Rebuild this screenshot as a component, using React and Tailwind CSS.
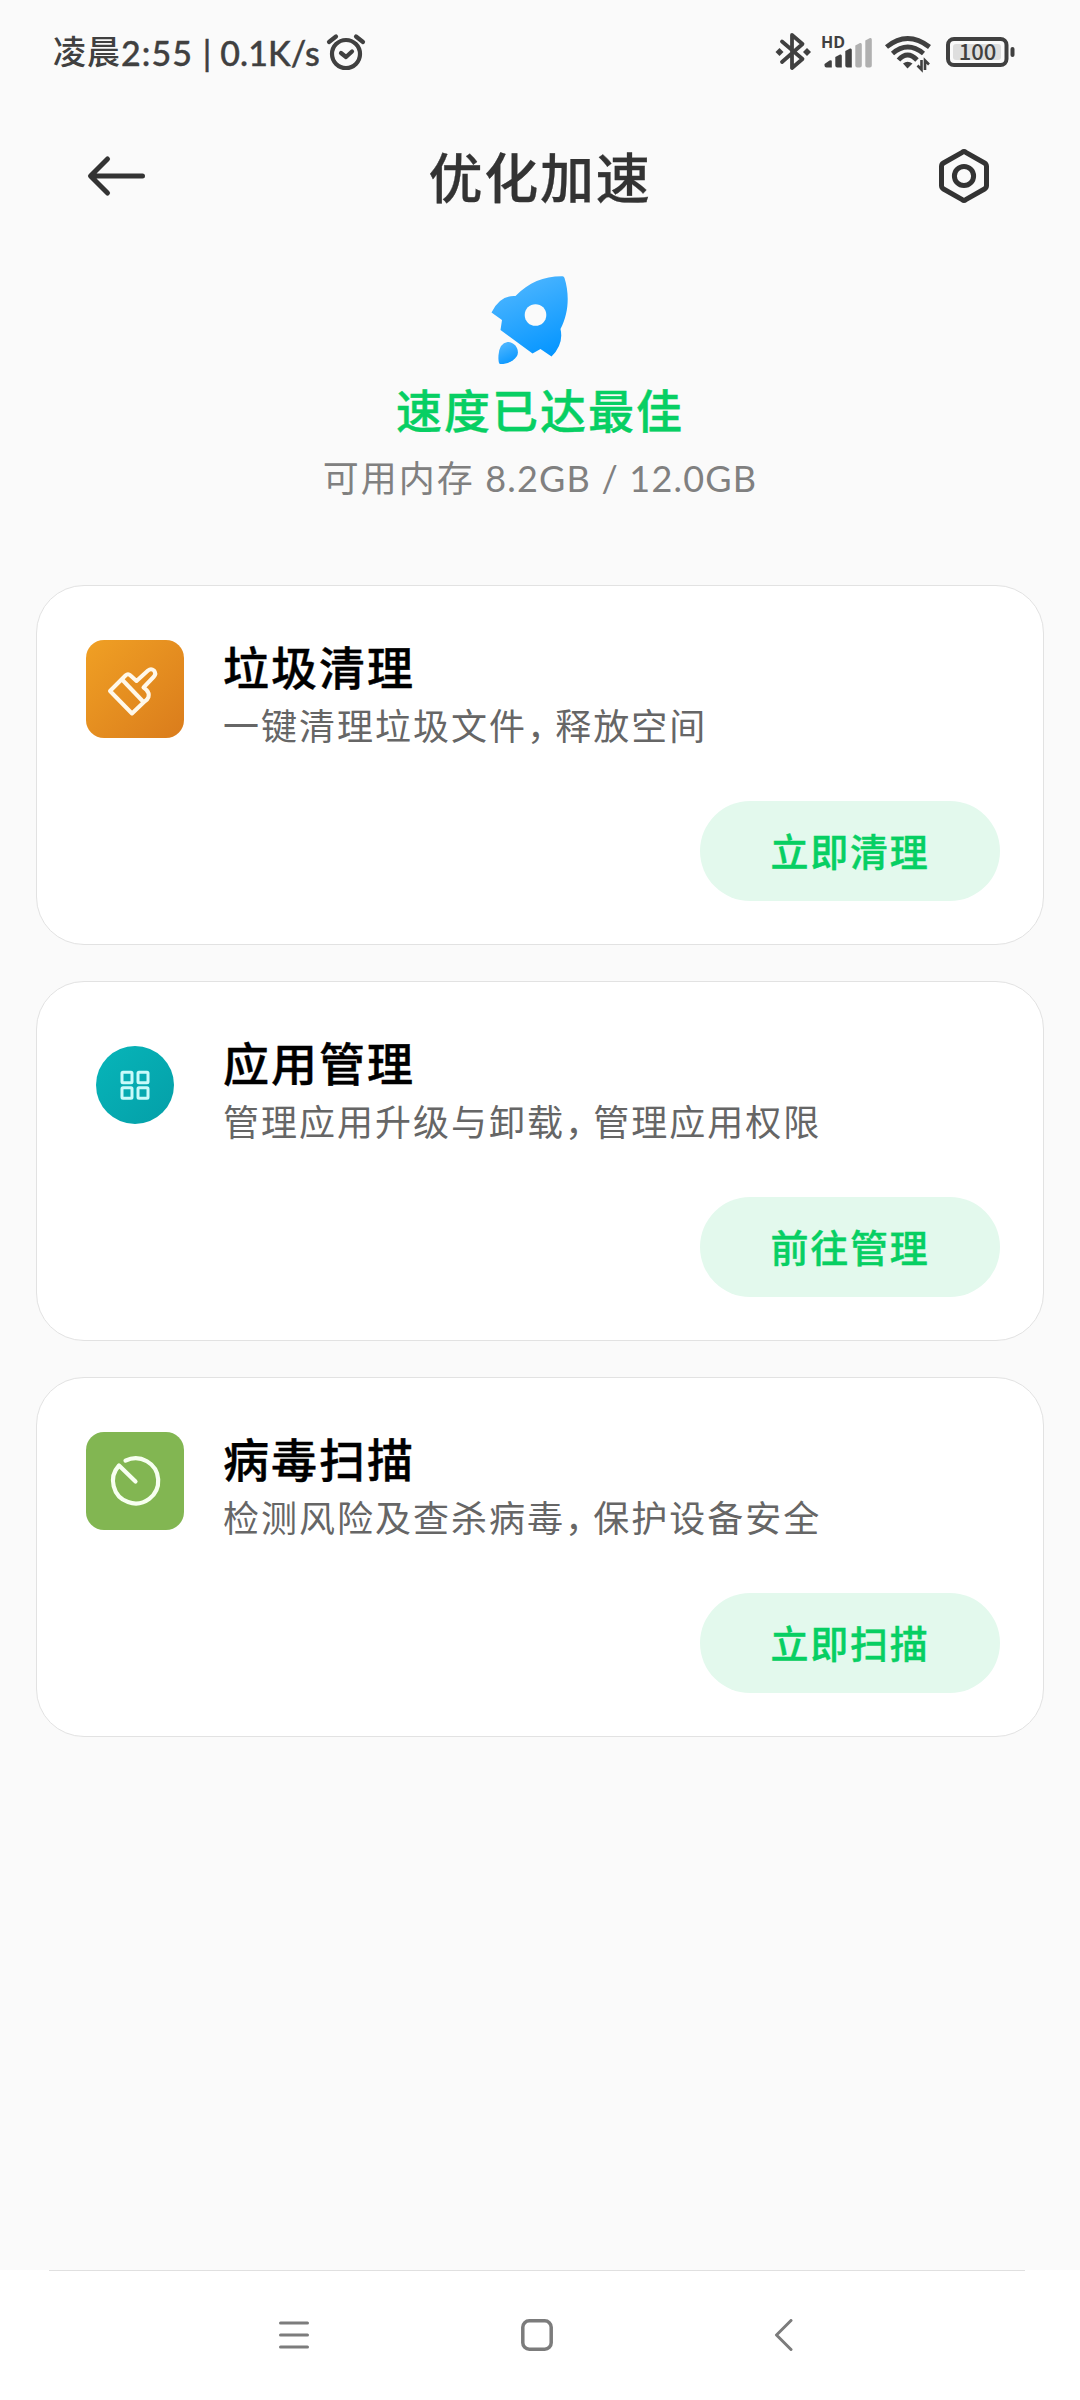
import React from 'react'

const cards = [
    {
        title: '垃圾清理',
        desc: ['一键清理垃圾文件', '释放空间'],
        action: '立即清理',
        icon: BrushIcon
    },
    {
        title: '应用管理',
        desc: ['管理应用升级与卸载', '管理应用权限'],
        action: '前往管理',
        icon: AppsIcon
    },
    {
        title: '病毒扫描',
        desc: ['检测风险及查杀病毒', '保护设备安全'],
        action: '立即扫描',
        icon: ScanIcon
    }
]

function BrushIcon() {
    return (
        <svg width="98" height="98" viewBox="0 0 98 98" fill="none">
            <defs>
                <linearGradient id="brush" x1="0" y1="0" x2="1" y2="1">
                    <stop offset="0" stopColor="#f0a024" />
                    <stop offset="1" stopColor="#da7c1c" />
                </linearGradient>
            </defs>
            <rect width="98" height="98" rx="18" fill="url(#brush)" />
            <g stroke="#fff8ea" strokeWidth="4" strokeLinejoin="round" strokeLinecap="round">
                <path d="M24 51L39.500 35.500Q42 33 44.500 35.500L50.500 41L62 30.500Q65 28 68 30.500Q70.500 33.500 68 36.500L57.500 47.500L60.500 50Q63.500 53 62.500 57Q61.500 60 58 62L46 73.500Z" />
                <path d="M36.500 40L57 61.500" />
            </g>
        </svg>
    )
}

function AppsIcon() {
    return (
        <svg width="98" height="98" viewBox="0 0 98 98" fill="none">
            <defs>
                <linearGradient id="apps" x1="0" y1="0" x2="1" y2="1">
                    <stop offset="0" stopColor="#07b5b9" />
                    <stop offset="1" stopColor="#049fa8" />
                </linearGradient>
            </defs>
            <circle cx="49" cy="49" r="39" fill="url(#apps)" />
            <g stroke="#c9fafa" strokeWidth="3">
                <rect x="36" y="36.300" width="10" height="10.500" rx="1" />
                <rect x="52" y="36.300" width="10" height="10.500" rx="1" />
                <rect x="36" y="51.700" width="10" height="10.500" rx="1" />
                <rect x="52" y="51.700" width="10" height="10.500" rx="1" />
            </g>
        </svg>
    )
}

function ScanIcon() {
    return (
        <svg width="98" height="98" viewBox="0 0 98 98" fill="none">
            <rect width="98" height="98" rx="18" fill="#82b652" />
            <path
                d="M39.500 28.600A22.600 22.600 0 1 1 33 33.500L49.500 49.500"
                stroke="#f7fff0"
                strokeWidth="4.200"
                strokeLinejoin="round"
                strokeLinecap="round"
            />
        </svg>
    )
}

function StatusBar() {
    return (
        <div className="h-[104px] pl-[53px] pr-[65px] flex items-center justify-between text-[#404040]">
            <div className="flex items-center">
                <span className="-mt-[3px] text-[33px] font-medium leading-none tracking-[1px]">凌晨</span>
                <span className="mt-px font-[Lato] text-[34px] font-medium leading-none tracking-[1.1px] whitespace-pre [-webkit-text-stroke:0.4px]">2:55 </span>
                <span className="mt-px font-[Lato] text-[34px] font-medium leading-none tracking-[0.1px] whitespace-pre [-webkit-text-stroke:0.4px]">| 0.1K/s</span>
                <svg className="ml-1.5" width="40" height="38" viewBox="0 0 40 38" fill="none" stroke="currentColor" strokeWidth="4.200" strokeLinecap="round" strokeLinejoin="round">
                    <circle cx="20" cy="21" r="14" />
                    <path d="M15 20L20 24L26 18.500M3 9L10 3.500M30 3.500L37 9" />
                </svg>
            </div>
            <div className="flex items-center">
                <svg width="240" height="44" viewBox="0 0 240 44" fill="none">
                    <path d="M7 11.500L27.500 29L17 38V5L27.500 14L7 32" stroke="currentColor" strokeWidth="3.800" strokeLinejoin="round" strokeLinecap="round" />
                    <path d="M0.500 22L4.500 18L8.500 22L4.500 26ZM28 22L32 18L36 22L32 26Z" fill="currentColor" />
                    <text x="46" y="17.500" fontSize="16" fontWeight="700" fontFamily="'Open Sans', sans-serif" fill="currentColor">HD</text>
                    <path d="M49.500 34L54.500 30.500Q56.800 29.500 56.800 31.500V37.500H51.500Q49.500 37.500 49.500 35.500ZM60.300 27L65 24.500Q66.800 24 66.800 26V37.500H62.300Q60.300 37.500 60.300 35.500ZM70.300 21L75 18.500Q76.800 18 76.800 20V37.500H72.300Q70.300 37.500 70.300 35.500Z" fill="currentColor" />
                    <path d="M80.300 15.500L85 13Q86.800 12.500 86.800 14.500V35.500Q86.800 37.500 84.800 37.500H82.300Q80.300 37.500 80.300 35.500ZM90.300 10.500L95 8Q96.800 7.500 96.800 9.500V35.500Q96.800 37.500 94.800 37.500H92.300Q90.300 37.500 90.300 35.500Z" fill="#b0b0b0" />
                    <g stroke="currentColor" strokeWidth="4.800">
                        <path d="M111.500 17Q132.500 0 154.500 17" />
                        <path d="M117.500 23.500Q132.500 10.500 148.500 23.500" />
                        <path d="M123.500 30Q132.500 20 142 30" />
                    </g>
                    <path d="M128 33.500Q132.500 30 137.500 33.500L132.500 38.500Z" fill="currentColor" />
                    <path d="M146.500 30V39.500L142.500 35.500M150 40V30.500L154 34.500" stroke="currentColor" strokeWidth="2.600" />
                    <rect x="173" y="9" width="58.500" height="26" rx="6" stroke="currentColor" strokeWidth="4" />
                    <rect x="178" y="14" width="48" height="16" rx="3" fill="#dedede" />
                    <rect x="235.500" y="17" width="4" height="10" rx="2" fill="currentColor" />
                    <text x="202.500" y="30" fontSize="22" fontWeight="500" textAnchor="middle" fontFamily="'Noto Sans CJK SC', sans-serif" fill="currentColor">100</text>
                </svg>
            </div>
        </div>
    )
}

function Header() {
    return (
        <header className="h-36 px-[84px] flex items-center justify-between text-[#333]">
            <svg width="64" height="50" viewBox="0 0 64 50" fill="none" stroke="currentColor" strokeWidth="5" strokeLinecap="round" strokeLinejoin="round">
                <path d="M23.500 8L6.500 25L23.500 42M7 25H58.500" />
            </svg>
            <h1 className="text-[54px] font-medium leading-none tracking-[1.8px] [-webkit-text-stroke:0.3px]">优化加速</h1>
            <svg width="64" height="60" viewBox="0 0 64 60" fill="none" stroke="currentColor" strokeWidth="5">
                <path d="M30.200 6.300Q32 5 33.800 6.300L52.500 17Q54.500 18.200 54.500 20.500V39.500Q54.500 41.800 52.500 43L33.800 53.700Q32 55 30.200 53.700L11.500 43Q9.500 41.800 9.500 39.500V20.500Q9.500 18.200 11.500 17Z" />
                <circle cx="32" cy="30" r="9.600" />
            </svg>
        </header>
    )
}

function Rocket() {
    return (
        <svg className="mr-[21px]" width="80" height="90" viewBox="0 0 80 90">
            <defs>
                <linearGradient id="rocket" x1="0.300" y1="0" x2="0.700" y2="1">
                    <stop offset="0" stopColor="#50b7ff" />
                    <stop offset="1" stopColor="#0696ff" />
                </linearGradient>
            </defs>
            <path d="M25.500 21C39 7 54 1 72.500 1.200Q74 1.200 74.500 3C79.500 19 79 38 70.500 54Q74 69 61.500 81.500L50.500 74L42.500 78.500L10.500 55L12 45L1.500 37.500Q10 20 25.500 21Z" fill="url(#rocket)" />
            <path d="M17.500 67C25 67 30 75 27 81C23 87 15 89.500 10 89Q8 88 8.500 80Q9.500 68 17.500 67Z" fill="url(#rocket)" />
            <circle cx="45.500" cy="40" r="10.800" fill="#fafafa" />
        </svg>
    )
}

function Card({ item }) {
    const Icon = item.icon
    return (
        <div className="h-[360px] rounded-[48px] border border-[#e2e2e2] bg-white pl-[49px] pr-[43px] pt-[54px] flex flex-col">
            <div className="flex">
                <Icon />
                <div className="ml-[39px]">
                    <h3 className="mt-0.5 text-[46px] leading-[46px] font-medium tracking-[2px] text-black [-webkit-text-stroke:0.4px]">{item.title}</h3>
                    <p className="mt-[18px] text-[36px] leading-[36px] tracking-[2px] text-[#666]">
                        {item.desc[0]}
                        <span className="tracking-[-7.8px]">，</span>
                        {item.desc[1]}
                    </p>
                </div>
            </div>
            <button className="mt-[59px] self-end w-[300px] h-[100px] pb-1 rounded-full bg-[#e3f9ed] text-[#07cf63] text-[38px] font-medium tracking-[1.8px] [-webkit-text-stroke:0.4px]">
                {item.action}
            </button>
        </div>
    )
}

function NavBar() {
    return (
        <nav className="h-[130px] bg-white pl-[49px] pr-[55px]">
            <div className="h-full border-t border-[#e0e0e0] pb-px flex items-center pl-[229px] text-[#7c7c7c]">
                <svg width="32" height="32" viewBox="0 0 32 32" stroke="currentColor" strokeWidth="3" strokeLinecap="round">
                    <path d="M2.500 4H29.500M2.500 16H29.500M2.500 28H29.500" />
                </svg>
                <svg className="ml-[211px]" width="32" height="32" viewBox="0 0 32 32" fill="none" stroke="currentColor" strokeWidth="3.500">
                    <rect x="1.800" y="1.800" width="28.400" height="28.400" rx="6.500" />
                </svg>
                <svg className="ml-[221px]" width="20" height="32" viewBox="0 0 20 32" fill="none" stroke="currentColor" strokeWidth="3" strokeLinecap="round" strokeLinejoin="round">
                    <path d="M17 1.500L2.500 16L17 30.500" />
                </svg>
            </div>
        </nav>
    )
}

export default function App() {
    return (
        <div className="w-[1080px] h-[2400px] bg-[#fafafa] flex flex-col overflow-hidden font-['Noto_Sans_CJK_SC',sans-serif]">
            <StatusBar />
            <Header />
            <section className="pt-[27px] flex flex-col items-center">
                <Rocket />
                <h2 className="mt-5 text-[46px] leading-[46px] font-medium tracking-[2px] text-[#07cf63] [-webkit-text-stroke:0.4px]">速度已达最佳</h2>
                <p className="mt-[27px] text-[36px] leading-[36px] tracking-[2px] text-[#808080]">
                    可用内存<span className="font-[Lato] tracking-[1.2px]"> 8.2GB / 12.0GB</span>
                </p>
            </section>
            <main className="mt-[89px] px-9 flex flex-col gap-9">
                {cards.map((item, i) => (
                    <Card key={i} item={item} />
                ))}
            </main>
            <div className="flex-1" />
            <NavBar />
        </div>
    )
}
